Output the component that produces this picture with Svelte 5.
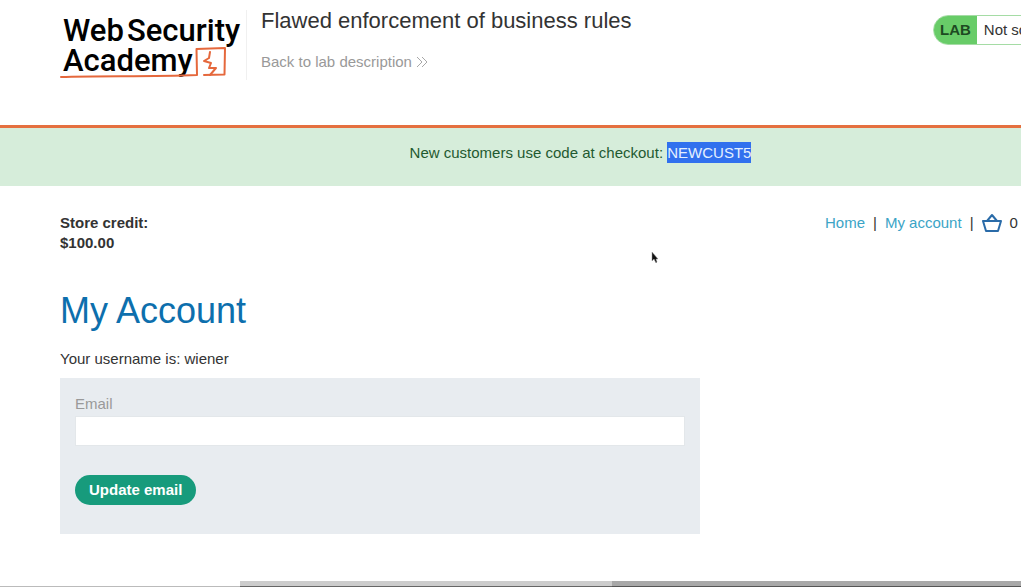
<script>
  let email = $state('');
</script>

<div class="window">
  <div class="page">
    <header>
      <a class="logo" href="#academy" aria-label="Web Security Academy">
        <svg width="184" height="70" viewBox="0 0 184 70">
          <g class="wordmark">
            <text x="3" y="31">Web</text>
            <text x="67" y="31">Security</text>
            <text x="3" y="61">Academy</text>
          </g>
          <g fill="none" stroke="#e5683c" stroke-linejoin="round" stroke-linecap="round">
            <path stroke-width="2" d="M1 67C40 65.500 90 67 137 65L136.500 39L165 38L164.500 64.500L144 65" />
            <path stroke-width="2" d="M150 42L149 48L144 51L151 53L149 58L156 58L150 65" />
          </g>
        </svg>
      </a>
      <div class="title">
        <h2>Flawed enforcement of business rules</h2>
        <a href="#lab">Back to lab description
          <svg width="12" height="12" viewBox="0 0 12 12" fill="none" stroke="#a8a8a8" stroke-width="1"><path d="M1 1l5 5-5 5M6 1l5 5-5 5" /></svg>
        </a>
      </div>
      <div class="status"><strong>LAB</strong><span>Not solved</span></div>
    </header>

    <div class="banner"><p>New customers use code at checkout: <mark>NEWCUST5</mark></p></div>

    <main>
      <div class="top">
        <p class="credit">Store credit:<br />$100.00</p>
        <nav>
          <a href="#home">Home</a><span>|</span><a href="#account">My account</a><span>|</span>
          <a class="basket" href="#cart" aria-label="Basket">
            <svg width="20" height="20" viewBox="0 0 20 20" fill="none" stroke="#2a6ba8" stroke-width="2" stroke-linejoin="round"><path d="M1 8H19L16 18H4ZM5 8L10 2L15 8" /></svg>
          </a>
          <span class="count">0</span>
        </nav>
      </div>
      <h1>My Account</h1>
      <p>Your username is: wiener</p>
      <form onsubmit={(e) => e.preventDefault()}>
        <label for="email">Email</label>
        <input id="email" type="email" bind:value={email} />
        <button type="submit">Update email</button>
      </form>
    </main>
  </div>

  <div class="timeline"><div class="buffered"></div><div class="rest"></div></div>

  <svg class="pointer" width="8" height="13" viewBox="0 0 8 13"><path d="M1 1V10L3 8L5 12L6 11L5 8H7Z" fill="#111" stroke="#999" stroke-width="0.500" /></svg>
</div>

<style>
  :global(body) { background: #fff; }
  .window {
    position: relative;
    display: flex;
    flex-direction: column;
    min-height: 100vh;
    overflow: hidden;
    font: 15px/20px "Liberation Sans", Arial, sans-serif;
    color: #333;
  }
  .page { width: calc(100% + 140px); }
  p, h1, h2 { margin: 0; }
  a { text-decoration: none; color: #3ba4c6; }
  header {
    display: flex;
    align-items: flex-start;
    box-sizing: border-box;
    height: 128px;
    padding: 10px 60px 0;
    border-bottom: 3px solid #e5703f;
  }
  .logo { height: 70px; padding-right: 2px; border-right: 1px solid #f0f0f0; }
  .logo svg { display: block; overflow: visible; }
  .wordmark { font: 500 31px Roboto, sans-serif; fill: #000; }
  .title { flex: 1; padding-left: 14px; }
  h2 { font-size: 22px; font-weight: 400; line-height: 22px; }
  .title a { display: flex; align-items: center; gap: 4px; margin-top: 20px; color: #999; }
  .status {
    display: flex;
    box-sizing: border-box;
    width: 168px;
    height: 30px;
    margin-top: 5px;
    border: 1px solid #a5dca5;
    border-radius: 15px;
    line-height: 28px;
    overflow: hidden;
    white-space: nowrap;
  }
  .status strong { padding: 0 6px; background: #68cc68; color: #1d4a22; }
  .status span { padding-left: 7px; }
  .banner { padding: 15px 0 23px; background: #d6edda; color: #1f5a30; text-align: center; }
  mark { padding: 2px 0; background: #3170ee; color: #e4efff; }
  main { padding: 27px 60px; }
  .top { display: flex; justify-content: space-between; }
  .credit { font-weight: 700; }
  nav { display: flex; gap: 8px; width: 276px; }
  .basket svg { display: block; }
  h1 { margin: 36px 0 16px; font-size: 36px; font-weight: 400; line-height: 44px; color: #0d6fad; }
  form {
    display: flex;
    flex-direction: column;
    align-items: flex-start;
    box-sizing: border-box;
    max-width: 640px;
    margin-top: 9px;
    padding: 16px 15px 29px;
    background: #e8ecf0;
  }
  label { color: #999; }
  input {
    box-sizing: border-box;
    width: 100%;
    height: 30px;
    margin: 2px 0 29px;
    padding: 0 8px;
    border: 1px solid #e3e7ea;
    background: #fff;
    font: inherit;
  }
  button {
    height: 30px;
    padding: 0 14px;
    border: 0;
    border-radius: 15px;
    background: #179b7c;
    color: #fff;
    font: 700 15px/20px "Liberation Sans", Arial, sans-serif;
  }
  .timeline { display: flex; height: 6px; margin-top: auto; padding-left: 23.500%; background: linear-gradient(#fff 5px, #bbb 5px); }
  .buffered { width: 47.700%; background: linear-gradient(#ccc 5px, #666 5px); }
  .rest { flex: 1; background: linear-gradient(#a8a8a8 5px, #555 5px); }
  .pointer { position: absolute; left: 651px; top: 251px; }
</style>
